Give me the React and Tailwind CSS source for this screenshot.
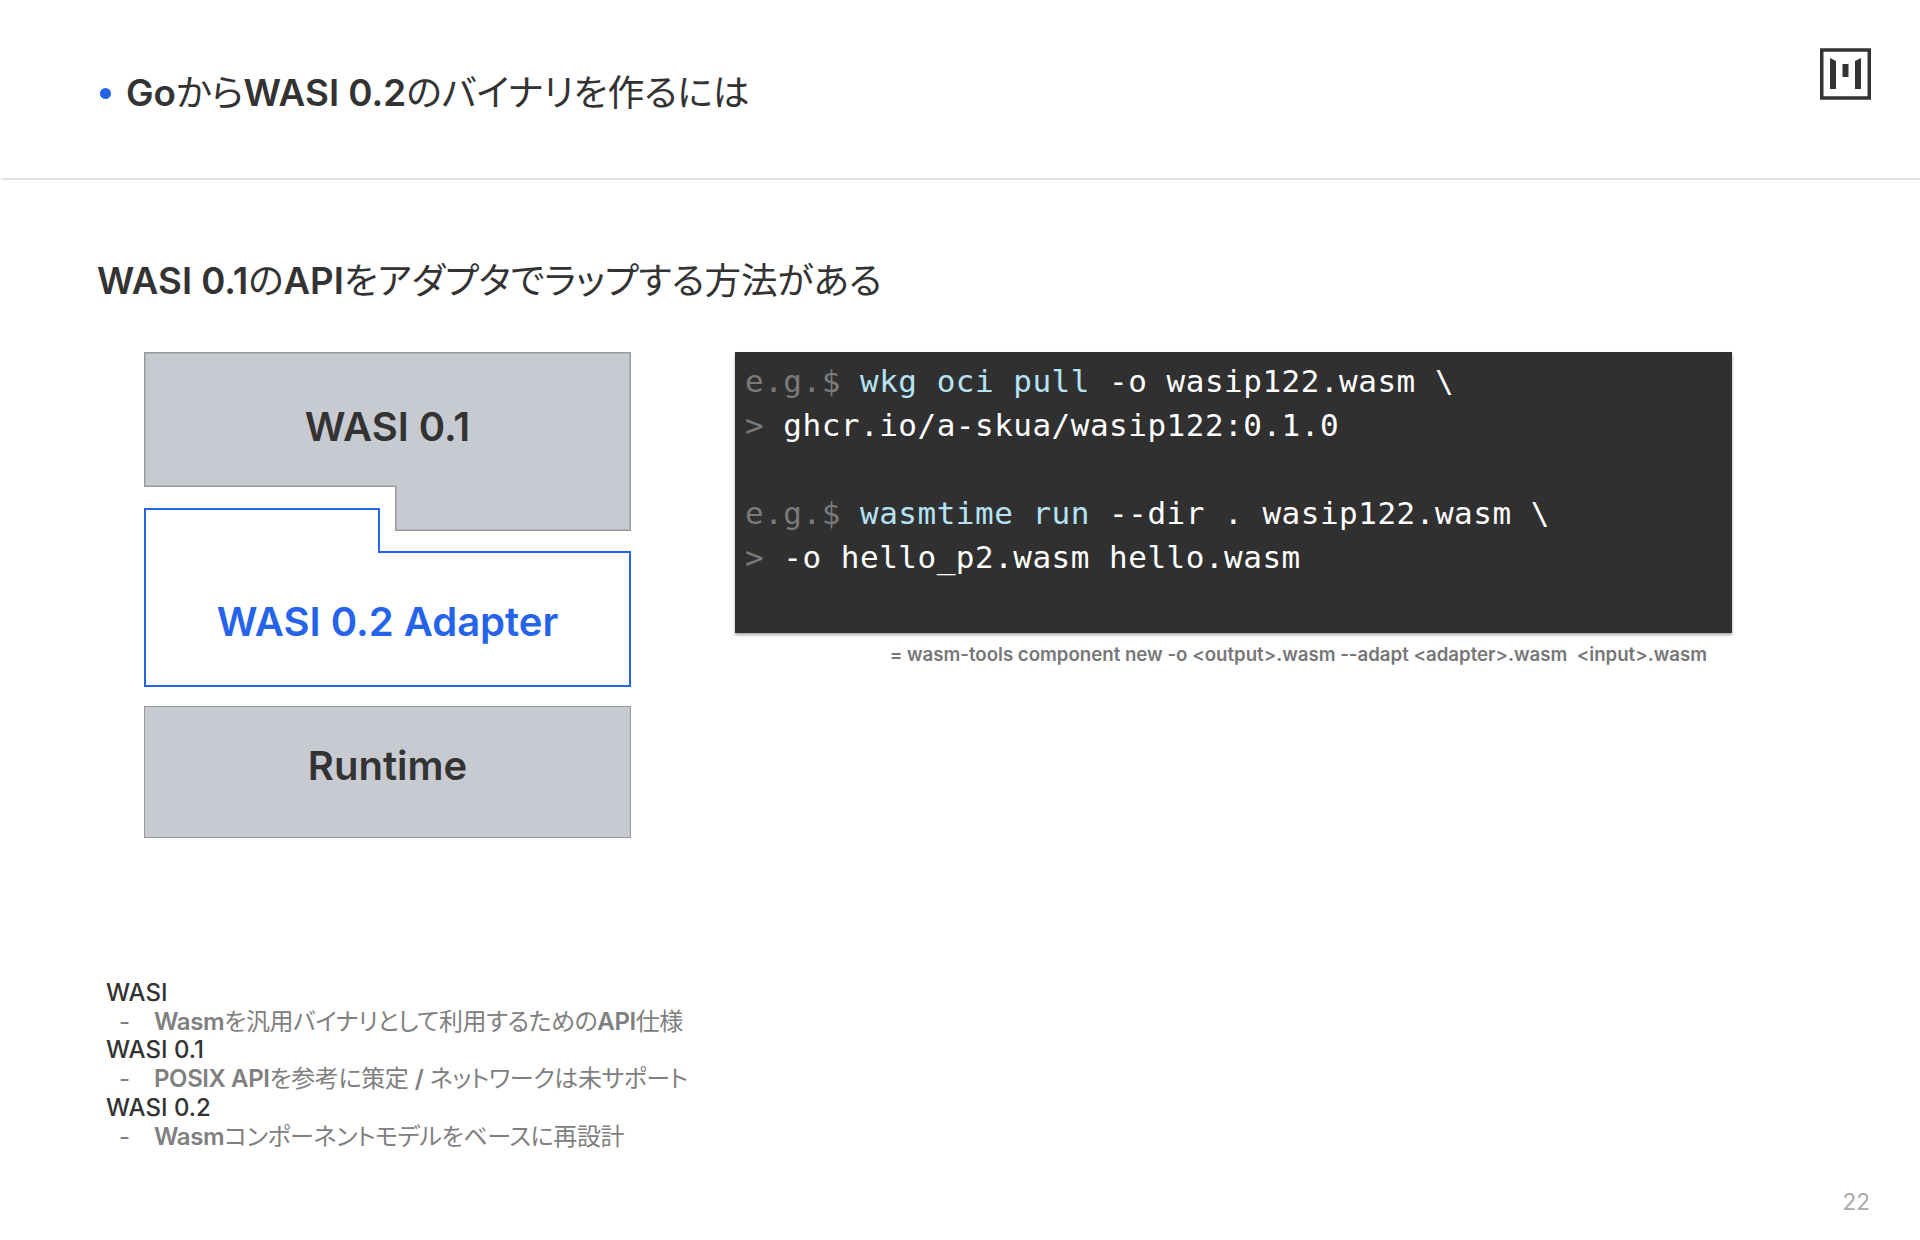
const sans = "font-['Inter','Noto_Sans_CJK_JP',sans-serif] [font-feature-settings:'palt']";

function Logo() {
  return (
    <svg width="51" height="52" viewBox="0 0 51 52" className="shrink-0">
      <rect x="1.75" y="2" width="47.5" height="48" fill="none" stroke="#333333" strokeWidth="3.5" />
      <path d="M10 10 L16 13 L16 41 L10 41 Z" fill="#333333" />
      <path d="M41 10 L35 13 L35 41 L41 41 Z" fill="#333333" />
      <rect x="22.5" y="16" width="6" height="13" fill="#333333" />
    </svg>
  );
}

function Stack() {
  return (
    <div className="flex flex-col w-[487px] ml-[46px]">
      <div className="relative h-[179px] pt-[50px] text-center text-[40px] leading-[50px] font-semibold text-[#333333]">
        <svg width="487" height="179" className="absolute inset-0">
          <path d="M0.75 0.75 H486.25 V178.25 H251.75 V134.25 H0.75 Z" fill="#c7cad1" stroke="#97999e" strokeWidth="1.5" />
        </svg>
        <span className="relative">WASI 0.1</span>
      </div>
      <div className="relative h-[179px] -mt-[23px] pt-[89px] text-center text-[40px] leading-[50px] font-semibold text-[#2563eb]">
        <svg width="487" height="179" className="absolute inset-0">
          <path d="M1 1 H235 V44 H486 V178 H1 Z" fill="#ffffff" stroke="#2563eb" strokeWidth="2" />
        </svg>
        <span className="relative">WASI 0.2 Adapter</span>
      </div>
      <div className="h-[132px] mt-[19px] pt-[34px] text-center text-[40px] leading-[50px] font-semibold text-[#333333] bg-[#c7cad1] border-[1.5px] border-[#97999e]">
        Runtime
      </div>
    </div>
  );
}

function CodeBlock() {
  return (
    <div className="w-[997px]">
      <div className="h-[281px] bg-[#303030] shadow-[0_2px_3px_rgba(0,0,0,0.35)] pt-[7px] px-[10px] font-['DejaVu_Sans_Mono',monospace] text-[31px] leading-[44px] whitespace-pre text-white tracking-[0.5px]">
        <div><span className="text-[#7a7a7a]">e.g.$ </span><span className="text-[#b5e3f5]">wkg oci pull</span> -o wasip122.wasm \</div>
        <div><span className="text-[#7a7a7a]">&gt; </span>ghcr.io/a-skua/wasip122:0.1.0</div>
        <div className="h-[44px]" />
        <div><span className="text-[#7a7a7a]">e.g.$ </span><span className="text-[#b5e3f5]">wasmtime run</span> --dir . wasip122.wasm \</div>
        <div><span className="text-[#7a7a7a]">&gt; </span>-o hello_p2.wasm hello.wasm</div>
      </div>
      <p className="mt-[8px] mr-[25px] text-right text-[18.65px] leading-[26px] font-semibold text-[#777777] whitespace-pre">
        {"= wasm-tools component new -o <output>.wasm --adapt <adapter>.wasm  <input>.wasm"}
      </p>
    </div>
  );
}

function L({ children }) {
  return <span className="font-semibold">{children}</span>;
}

function Note({ title, children }) {
  return (
    <>
      <div className="text-[24px] leading-[28.7px] font-medium text-[#333333]">{title}</div>
      <div className="flex text-[24px] leading-[28.7px] text-[#808080] tracking-[-0.4px]">
        <span className="w-[48px] pl-[13px]">-</span>
        <span>{children}</span>
      </div>
    </>
  );
}

export default function App() {
  return (
    <div className={`${sans} w-[1920px] h-[1240px] bg-white flex flex-col`}>
      <header className="h-[180px] ml-[1px] border-b-2 border-[#e0e0e0] flex justify-between items-start pl-[99px] pr-[49px]">
        <div className="flex items-center gap-[15px] mt-[69px]">
          <span className="w-[11px] h-[11px] rounded-full bg-[#2563eb]" />
          <h1 className="text-[36.8px] leading-[48px] font-normal text-[#333333]">
            <L>Go</L>から<L>WASI 0.2</L>のバイナリを作るには
          </h1>
        </div>
        <div className="mt-[48px]">
          <Logo />
        </div>
      </header>

      <h2 className="mt-[77px] ml-[97px] text-[36.6px] leading-[48px] font-normal text-[#333333]">
        <L>WASI 0.1</L>の<L>API</L>をアダプタでラップする方法がある
      </h2>

      <div className="mt-[47px] ml-[98px] flex gap-[104px]">
        <Stack />
        <CodeBlock />
      </div>

      <div className="mt-[141px] ml-[106px]">
        <Note title="WASI"><L>Wasm</L>を汎用バイナリとして利用するための<L>API</L>仕様</Note>
        <Note title="WASI 0.1"><L>POSIX API</L>を参考に策定 <L>/</L> ネットワークは未サポート</Note>
        <Note title="WASI 0.2"><L>Wasm</L>コンポーネントモデルをベースに再設計</Note>
      </div>

      <div className="mt-auto mb-[25px] pr-[50px] text-right text-[22.5px] leading-[26px] text-[#aaaaaa]">22</div>
    </div>
  );
}
